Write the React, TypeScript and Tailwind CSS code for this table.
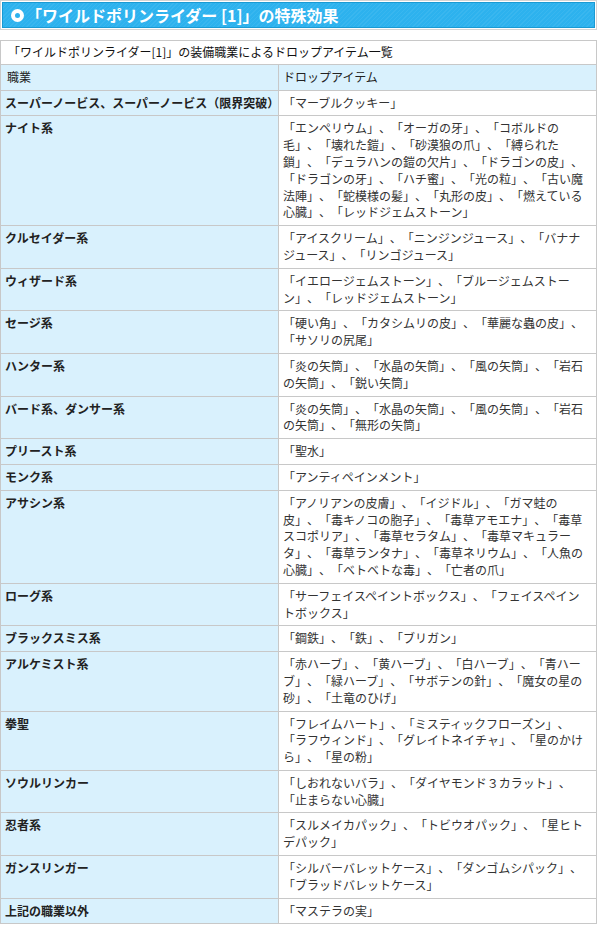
const rows: { job: string; drops: string[] }[] = [
  { job: "スーパーノービス、スーパーノービス（限界突破）", drops: ["「マーブルクッキー」"] },
  {
    job: "ナイト系",
    drops: [
      "「エンペリウム」、「オーガの牙」、「コボルドの",
      "毛」、「壊れた鎧」、「砂漠狼の爪」、「縛られた",
      "鎖」、「デュラハンの鎧の欠片」、「ドラゴンの皮」、",
      "「ドラゴンの牙」、「ハチ蜜」、「光の粒」、「古い魔",
      "法陣」、「蛇模様の髪」、「丸形の皮」、「燃えている",
      "心臓」、「レッドジェムストーン」",
    ],
  },
  {
    job: "クルセイダー系",
    drops: ["「アイスクリーム」、「ニンジンジュース」、「バナナ", "ジュース」、「リンゴジュース」"],
  },
  {
    job: "ウィザード系",
    drops: ["「イエロージェムストーン」、「ブルージェムストー", "ン」、「レッドジェムストーン」"],
  },
  {
    job: "セージ系",
    drops: ["「硬い角」、「カタシムリの皮」、「華麗な蟲の皮」、", "「サソリの尻尾」"],
  },
  {
    job: "ハンター系",
    drops: ["「炎の矢筒」、「水晶の矢筒」、「風の矢筒」、「岩石", "の矢筒」、「鋭い矢筒」"],
  },
  {
    job: "バード系、ダンサー系",
    drops: ["「炎の矢筒」、「水晶の矢筒」、「風の矢筒」、「岩石", "の矢筒」、「無形の矢筒」"],
  },
  { job: "プリースト系", drops: ["「聖水」"] },
  { job: "モンク系", drops: ["「アンティペインメント」"] },
  {
    job: "アサシン系",
    drops: [
      "「アノリアンの皮膚」、「イジドル」、「ガマ蛙の",
      "皮」、「毒キノコの胞子」、「毒草アモエナ」、「毒草",
      "スコポリア」、「毒草セラタム」、「毒草マキュラー",
      "タ」、「毒草ランタナ」、「毒草ネリウム」、「人魚の",
      "心臓」、「ベトベトな毒」、「亡者の爪」",
    ],
  },
  {
    job: "ローグ系",
    drops: ["「サーフェイスペイントボックス」、「フェイスペイン", "トボックス」"],
  },
  { job: "ブラックスミス系", drops: ["「鋼鉄」、「鉄」、「ブリガン」"] },
  {
    job: "アルケミスト系",
    drops: [
      "「赤ハーブ」、「黄ハーブ」、「白ハーブ」、「青ハー",
      "ブ」、「緑ハーブ」、「サボテンの針」、「魔女の星の",
      "砂」、「土竜のひげ」",
    ],
  },
  {
    job: "拳聖",
    drops: [
      "「フレイムハート」、「ミスティックフローズン」、",
      "「ラフウィンド」、「グレイトネイチャ」、「星のかけ",
      "ら」、「星の粉」",
    ],
  },
  {
    job: "ソウルリンカー",
    drops: ["「しおれないバラ」、「ダイヤモンド３カラット」、", "「止まらない心臓」"],
  },
  {
    job: "忍者系",
    drops: ["「スルメイカパック」、「トビウオパック」、「星ヒト", "デパック」"],
  },
  {
    job: "ガンスリンガー",
    drops: ["「シルバーバレットケース」、「ダンゴムシパック」、", "「ブラッドバレットケース」"],
  },
  { job: "上記の職業以外", drops: ["「マステラの実」"] },
];

export default function App() {
  return (
    <div className="w-[597px] bg-white font-['Noto_Sans_CJK_JP','Noto_Sans',sans-serif] text-[12px] leading-[16.8px] text-[#333] [text-spacing-trim:space-all]">
      {/* Title */}
      <div className="border border-[#d4d4d4] p-px">
        <div className="flex h-[26px] items-center gap-[2px] border border-[#1a9ad3] bg-[#2db2ee] bg-[repeating-linear-gradient(135deg,rgba(255,255,255,0.06)_0px,rgba(255,255,255,0.06)_1px,transparent_1px,transparent_3px)] pl-[8px]">
          <span className="flex h-[13px] w-[13px] items-center justify-center rounded-full bg-white">
            <span className="h-[5px] w-[5px] rounded-full bg-[#2db2ee]" />
          </span>
          <h2 className="text-[16px] leading-[20px] font-bold text-white">「ワイルドポリンライダー [1]」の特殊効果</h2>
        </div>
      </div>

      {/* Drop table */}
      <table className="mt-[10px] w-full table-fixed border-collapse border border-[#c8c8c8]">
        <colgroup>
          <col className="w-[278px]" />
          <col />
        </colgroup>
        <thead>
          <tr>
            <td colSpan={2} className="border border-[#c8c8c8] px-[7px] py-[3px] text-[#111]">
              「ワイルドポリンライダー[1]」の装備職業によるドロップアイテム一覧
            </td>
          </tr>
          <tr className="bg-[#d9f1fd]">
            <th className="border border-[#c8c8c8] px-[6px] py-1 text-left font-normal text-[#222]">職業</th>
            <th className="border border-[#c8c8c8] px-[4px] py-1 text-left font-normal text-[#222]">ドロップアイテム</th>
          </tr>
        </thead>
        <tbody>
          {rows.map((row) => (
            <tr key={row.job}>
              <th className="border border-[#c8c8c8] bg-[#d9f1fd] px-[4px] py-1 text-left align-top font-bold text-[#222] whitespace-nowrap">
                {row.job}
              </th>
              <td className="border border-[#c8c8c8] pl-[4px] pr-[2px] py-1 align-top">
                {row.drops.map((line, i) => (
                  <div key={i} className="whitespace-nowrap">
                    {line}
                  </div>
                ))}
              </td>
            </tr>
          ))}
        </tbody>
      </table>
    </div>
  );
}
